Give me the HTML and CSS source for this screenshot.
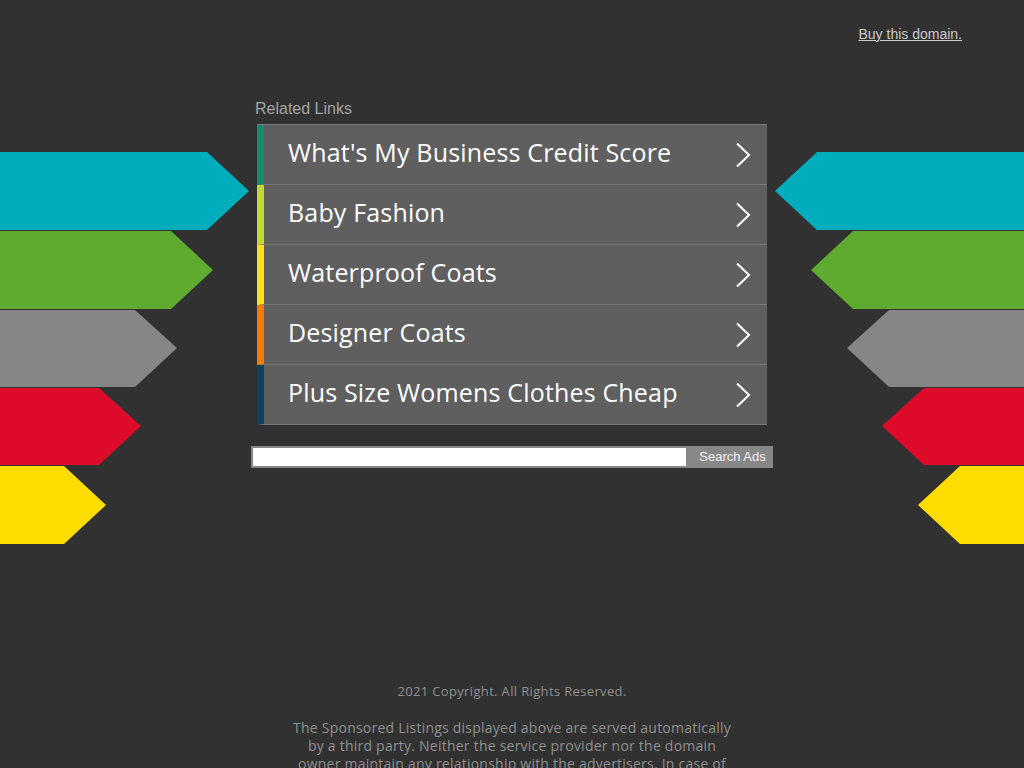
FILE: index.html
```html
<!DOCTYPE html>
<html>
<head>
<meta charset="utf-8">
<link rel="stylesheet" href="styles.css">
</head>
<body>
<svg class="deco deco-left" width="260" height="400" viewBox="0 0 260 400">
  <polygon points="0,0 207,0 249,39 207,78 0,78" fill="#00adbd"/>
  <polygon points="0,79 171,79 213,118 171,157 0,157" fill="#5fab2f"/>
  <polygon points="0,158 135,158 177,196 135,235 0,235" fill="#868686"/>
  <polygon points="0,236 99,236 141,274 99,313 0,313" fill="#dd0a2a"/>
  <polygon points="0,314 64,314 106,353 64,392 0,392" fill="#ffdd00"/>
</svg>
<svg class="deco deco-right" width="260" height="400" viewBox="764 0 260 400">
  <polygon points="1024,0 817,0 775,39 817,78 1024,78" fill="#00adbd"/>
  <polygon points="1024,79 853,79 811,118 853,157 1024,157" fill="#5fab2f"/>
  <polygon points="1024,158 889,158 847,196 889,235 1024,235" fill="#868686"/>
  <polygon points="1024,236 924,236 882,274 924,313 1024,313" fill="#dd0a2a"/>
  <polygon points="1024,314 960,314 918,353 960,392 1024,392" fill="#ffdd00"/>
</svg>
<header class="top">
  <a class="buy" href="#">Buy this domain.</a>
</header>
<main class="content">
  <div class="related">Related Links</div>
  <ul class="links">
    <li class="link c1"><span class="label">What's My Business Credit Score</span><svg class="chev" width="16" height="26" viewBox="0 0 16 26"><polyline points="2,1.5 14,13 2,24.5" fill="none" stroke="#fff" stroke-width="2"/></svg></li>
    <li class="link c2"><span class="label">Baby Fashion</span><svg class="chev" width="16" height="26" viewBox="0 0 16 26"><polyline points="2,1.5 14,13 2,24.5" fill="none" stroke="#fff" stroke-width="2"/></svg></li>
    <li class="link c3"><span class="label">Waterproof Coats</span><svg class="chev" width="16" height="26" viewBox="0 0 16 26"><polyline points="2,1.5 14,13 2,24.5" fill="none" stroke="#fff" stroke-width="2"/></svg></li>
    <li class="link c4"><span class="label">Designer Coats</span><svg class="chev" width="16" height="26" viewBox="0 0 16 26"><polyline points="2,1.5 14,13 2,24.5" fill="none" stroke="#fff" stroke-width="2"/></svg></li>
    <li class="link c5"><span class="label">Plus Size Womens Clothes Cheap</span><svg class="chev" width="16" height="26" viewBox="0 0 16 26"><polyline points="2,1.5 14,13 2,24.5" fill="none" stroke="#fff" stroke-width="2"/></svg></li>
  </ul>
  <form class="search">
    <input class="search-input" type="text">
    <button class="search-btn" type="button">Search Ads</button>
  </form>
</main>
<footer class="foot">
  <p class="copy">2021 Copyright. All Rights Reserved.</p>
  <p class="disclaimer">The Sponsored Listings displayed above are served automatically by a third party. Neither the service provider nor the domain owner maintain any relationship with the advertisers. In case of trademark issues please contact the domain owner directly (contact information can be found in whois).</p>
</footer>
</body>
</html>
```
FILE: styles.css
```css
html, body {
  margin: 0;
  padding: 0;
  background: #313131;
  height: 100%;
}
body {
  font-family: "Liberation Sans", Arial, sans-serif;
  position: relative;
  overflow: hidden;
}
.deco {
  position: absolute;
  top: 152px;
  display: block;
}
.deco-left { left: 0; }
.deco-right { right: 0; }

.top {
  display: flex;
  justify-content: flex-end;
  padding: 26px 62px 0 0;
  height: 58px;
  box-sizing: border-box;
}
.buy {
  color: #c9c9c9;
  font-size: 14px;
  text-decoration: underline;
  line-height: 16px;
}
.content {
  width: 522px;
  margin: 0 auto;
  position: relative;
  z-index: 1;
}
.related {
  color: #a3a3a3;
  font-size: 16px;
  line-height: 18px;
  padding: 42px 0 0 4px;
  height: 66px;
  box-sizing: border-box;
}
.links {
  list-style: none;
  margin: 0 6px;
  padding: 0;
  border-top: 1px solid #777;
}
.link {
  display: flex;
  align-items: center;
  justify-content: space-between;
  height: 59px;
  background: #5f5f5f;
  border-bottom: 1px solid #777;
  border-left: 7px solid;
  padding: 0 16px 0 24px;
}
.c1 { border-left-color: #1b8a6d; }
.c2 { border-left-color: #c4d934; }
.c3 { border-left-color: #ffe01a; }
.c4 { border-left-color: #f87900; }
.c5 { border-left-color: #0c4356; }
.label {
  color: #fff;
  font-family: "Open Sans", sans-serif;
  font-size: 25px;
  letter-spacing: 0.17px;
  line-height: 30px;
  margin-bottom: 6px;
}
.chev { display: block; }
.search {
  display: flex;
  margin: 21px 0 0;
  height: 22px;
  background: #878787;
  padding: 2px 0 2px 2px;
  box-sizing: border-box;
}
.search-input {
  width: 433px;
  height: 18px;
  border: none;
  margin: 0;
  padding: 0;
  background: #fff;
  box-sizing: border-box;
}
.search-btn {
  flex: 1;
  background: #878787;
  border: none;
  color: #f2f2f2;
  font-family: "Liberation Sans", Arial, sans-serif;
  font-size: 13px;
  padding: 0 0 0 6px;
  margin: 0;
  height: 18px;
  line-height: 18px;
}
.foot {
  text-align: center;
  color: #909090;
  font-family: "Open Sans", sans-serif;
  font-size: 13px;
  margin-top: 214px;
}
.copy {
  margin: 0;
  line-height: 18px;
  letter-spacing: 0.35px;
}
.disclaimer {
  width: 442px;
  margin: 19px auto 0;
  line-height: 18px;
  font-size: 14px;
  letter-spacing: 0.23px;
}
```
